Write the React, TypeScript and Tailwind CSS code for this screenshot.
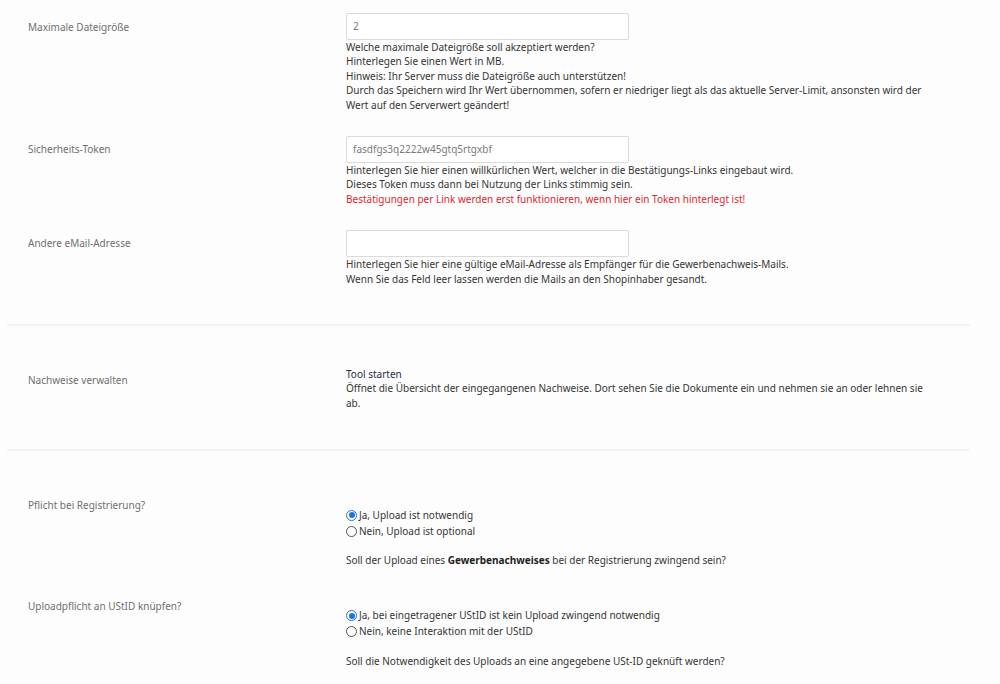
import React from "react";

const font = { fontFamily: '"Noto Sans", "Open Sans", sans-serif' };

function Row({ label, labelPt = "pt-[7px]", children }: { label: string; labelPt?: string; children: React.ReactNode }) {
  return (
    <div className="flex">
      <div className={`w-[346px] shrink-0 pl-[28px] text-[10px] leading-[14.4px] text-[#6f6f6f] ${labelPt}`}>{label}</div>
      <div className="w-[582px] text-[10px] leading-[14.4px] text-[#353535]">{children}</div>
    </div>
  );
}

function TextInput({ value }: { value: string }) {
  return (
    <div className="w-[283px] h-[27px] border border-[#dadada] rounded-[2px] bg-white px-[6px] flex items-center text-[10px] text-[#7a7a7a]">
      {value}
    </div>
  );
}

function Radio({ checked, label }: { checked?: boolean; label: string }) {
  return (
    <div className="flex items-center h-[16px]">
      {checked ? (
        <span className="w-[11px] h-[11px] rounded-full border-[1.5px] border-[#1a73e8] bg-white flex items-center justify-center">
          <span className="w-[6px] h-[6px] rounded-full bg-[#1a73e8]" />
        </span>
      ) : (
        <span className="w-[11px] h-[11px] rounded-full border border-[#555] bg-white" />
      )}
      <span className="ml-[2px]">{label}</span>
    </div>
  );
}

function Separator() {
  return <div className="ml-[7px] w-[963px] h-[2px] bg-[#f3f3f3]" />;
}

export default function App() {
  return (
    <div className="w-[1000px] h-[684px] bg-[#fdfdfd] overflow-hidden" style={font}>
      <div className="pt-[13px]">
        <Row label="Maximale Dateigröße">
          <TextInput value="2" />
          <div>Welche maximale Dateigröße soll akzeptiert werden?</div>
          <div>Hinterlegen Sie einen Wert in MB.</div>
          <div>Hinweis: Ihr Server muss die Dateigröße auch unterstützen!</div>
          <div>
            Durch das Speichern wird Ihr Wert übernommen, sofern er niedriger liegt als das aktuelle Server-Limit, ansonsten wird der Wert auf den Serverwert geändert!
          </div>
        </Row>
        <div className="h-[24px]" />
        <Row label="Sicherheits-Token" labelPt="pt-[6px]">
          <TextInput value="fasdfgs3q2222w45gtq5rtgxbf" />
          <div>Hinterlegen Sie hier einen willkürlichen Wert, welcher in die Bestätigungs-Links eingebaut wird.</div>
          <div>Dieses Token muss dann bei Nutzung der Links stimmig sein.</div>
          <div className="text-[#e3262d]">Bestätigungen per Link werden erst funktionieren, wenn hier ein Token hinterlegt ist!</div>
        </Row>
        <div className="h-[24px]" />
        <Row label="Andere eMail-Adresse" labelPt="pt-[6px]">
          <TextInput value="" />
          <div>Hinterlegen Sie hier eine gültige eMail-Adresse als Empfänger für die Gewerbenachweis-Mails.</div>
          <div>Wenn Sie das Feld leer lassen werden die Mails an den Shopinhaber gesandt.</div>
        </Row>
        <div className="h-[38px]" />
        <Separator />
        <div className="h-[41px]" />
        <Row label="Nachweise verwalten" labelPt="pt-[6px]">
          <div className="text-[#1f2f44]">Tool starten</div>
          <div>Öffnet die Übersicht der eingegangenen Nachweise. Dort sehen Sie die Dokumente ein und nehmen sie an oder lehnen sie ab.</div>
        </Row>
        <div className="h-[39px]" />
        <Separator />
        <div className="h-[47px]" />
        <Row label="Pflicht bei Registrierung?" labelPt="pt-0">
          <div className="pt-[9px]">
            <Radio checked label="Ja, Upload ist notwendig" />
            <Radio label="Nein, Upload ist optional" />
            <div className="mt-[14px]">
              Soll der Upload eines <b className="font-bold text-[#222]">Gewerbenachweises</b> bei der Registrierung zwingend sein?
            </div>
          </div>
        </Row>
        <div className="h-[31px]" />
        <Row label="Uploadpflicht an UStID knüpfen?" labelPt="pt-0">
          <div className="pt-[9px]">
            <Radio checked label="Ja, bei eingetragener UStID ist kein Upload zwingend notwendig" />
            <Radio label="Nein, keine Interaktion mit der UStID" />
            <div className="mt-[14px]">Soll die Notwendigkeit des Uploads an eine angegebene USt-ID geknüft werden?</div>
          </div>
        </Row>
      </div>
    </div>
  );
}
